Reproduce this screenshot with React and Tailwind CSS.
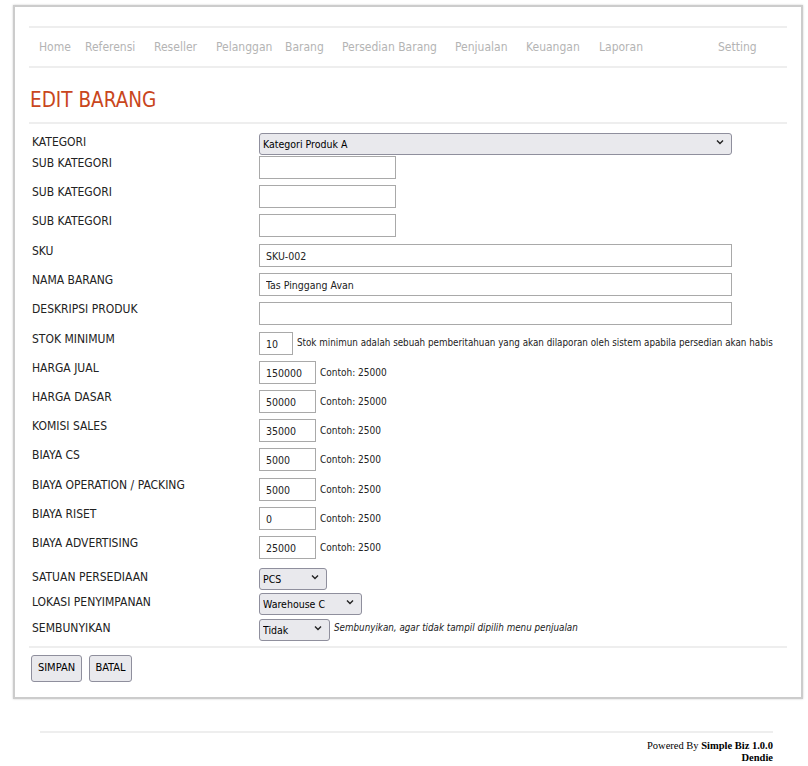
import React from 'react';

const NAV = [
  { label: 'Home', w: 'w-[46px]' },
  { label: 'Referensi', w: 'w-[69px]' },
  { label: 'Reseller', w: 'w-[62px]' },
  { label: 'Pelanggan', w: 'w-[69px]' },
  { label: 'Barang', w: 'w-[57px]' },
  { label: 'Persedian Barang', w: 'w-[113px]' },
  { label: 'Penjualan', w: 'w-[71px]' },
  { label: 'Keuangan', w: 'w-[73px]' },
  { label: 'Laporan', w: 'w-[119px]' },
  { label: 'Setting', w: 'w-auto' },
];

function Chevron() {
  return (
    <svg
      width="8"
      height="6"
      viewBox="0 0 8 6"
      className="pointer-events-none absolute right-[8px] top-1/2 -translate-y-1/2"
      aria-hidden
    >
      <path d="M1 1.5 L4 4.5 L7 1.5" fill="none" stroke="#222" strokeWidth="1.4" />
    </svg>
  );
}

function Select({ value, w }) {
  return (
    <div className={`relative h-[22px] ${w}`}>
      <select
        defaultValue={value}
        className="h-full w-full appearance-none rounded-[3px] border border-[#8f8f9d] bg-[#e9e9ed] pl-[3px] text-[10.5px] leading-none text-black outline-none"
      >
        <option>{value}</option>
      </select>
      <Chevron />
    </div>
  );
}

function Input({ value = '', w }) {
  return (
    <input
      type="text"
      defaultValue={value}
      className={`h-[23px] ${w} border border-[#a9a9a9] bg-white px-[6px] text-[10.5px] text-[#222] outline-none`}
    />
  );
}

function Hint({ children, italic, size = 'text-[10px]' }) {
  return (
    <span className={`ml-[4px] whitespace-nowrap ${size} text-[#222] ${italic ? 'italic' : ''}`}>{children}</span>
  );
}

function Row({ label, mt, pt, children }) {
  return (
    <div className={`flex items-start ${mt}`}>
      <div className={`w-[230px] shrink-0 pl-[3px] text-[12px] leading-[15px] text-[#222] ${pt}`}>{label}</div>
      <div className="flex items-center">{children}</div>
    </div>
  );
}

export default function App() {
  return (
    <div className="min-h-[766px] bg-white pt-[5px] text-[#222] [font-family:'DejaVu_Sans_Condensed','DejaVu_Sans',sans-serif]">
      <div className="ml-[13px] w-[790px] border-2 border-[#cccccc] bg-white px-[14px] pt-[19px] pb-[15px] shadow-[0_0_2px_rgba(0,0,0,0.2)]">
        <nav className="flex h-[42px] items-center border-y-2 border-[#eeeeee] pl-[10px] text-[12px] text-[#b4b4b4]">
          {NAV.map((n) => (
            <span key={n.label} className={`${n.w} shrink-0`}>{n.label}</span>
          ))}
        </nav>

        <h1 className="pt-[22px] pb-[12px] pl-[1px] text-[20.5px] leading-[20px] text-[#c9461c]">EDIT BARANG</h1>
        <div className="border-t-2 border-[#eeeeee]" />

        <form className="flex flex-col">
          <Row label="KATEGORI" mt="mt-[7px]" pt="pt-[4px]">
            <Select value="Kategori Produk A" w="w-[473px]" />
          </Row>
          <Row label="SUB KATEGORI" mt="mt-[3px]" pt="pt-0">
            <Input w="w-[137px]" />
          </Row>
          <Row label="SUB KATEGORI" mt="mt-[6px]" pt="pt-0">
            <Input w="w-[137px]" />
          </Row>
          <Row label="SUB KATEGORI" mt="mt-[6px]" pt="pt-0">
            <Input w="w-[137px]" />
          </Row>
          <Row label="SKU" mt="mt-[7px]" pt="pt-0">
            <Input value="SKU-002" w="w-[473px]" />
          </Row>
          <Row label="NAMA BARANG" mt="mt-[6px]" pt="pt-0">
            <Input value="Tas Pinggang Avan" w="w-[473px]" />
          </Row>
          <Row label="DESKRIPSI PRODUK" mt="mt-[6px]" pt="pt-0">
            <Input w="w-[473px]" />
          </Row>
          <Row label="STOK MINIMUM" mt="mt-[7px]" pt="pt-0">
            <Input value="10" w="w-[34px]" />
            <Hint size="text-[9.75px]">Stok minimun adalah sebuah pemberitahuan yang akan dilaporan oleh sistem apabila persedian akan habis</Hint>
          </Row>
          <Row label="HARGA JUAL" mt="mt-[6px]" pt="pt-0">
            <Input value="150000" w="w-[57px]" />
            <Hint>Contoh: 25000</Hint>
          </Row>
          <Row label="HARGA DASAR" mt="mt-[6px]" pt="pt-0">
            <Input value="50000" w="w-[57px]" />
            <Hint>Contoh: 25000</Hint>
          </Row>
          <Row label="KOMISI SALES" mt="mt-[6px]" pt="pt-0">
            <Input value="35000" w="w-[57px]" />
            <Hint>Contoh: 2500</Hint>
          </Row>
          <Row label="BIAYA CS" mt="mt-[6px]" pt="pt-0">
            <Input value="5000" w="w-[57px]" />
            <Hint>Contoh: 2500</Hint>
          </Row>
          <Row label="BIAYA OPERATION / PACKING" mt="mt-[7px]" pt="pt-0">
            <Input value="5000" w="w-[57px]" />
            <Hint>Contoh: 2500</Hint>
          </Row>
          <Row label="BIAYA RISET" mt="mt-[6px]" pt="pt-0">
            <Input value="0" w="w-[57px]" />
            <Hint>Contoh: 2500</Hint>
          </Row>
          <Row label="BIAYA ADVERTISING" mt="mt-[6px]" pt="pt-0">
            <Input value="25000" w="w-[57px]" />
            <Hint>Contoh: 2500</Hint>
          </Row>
          <Row label="SATUAN PERSEDIAAN" mt="mt-[7px]" pt="pt-[4px]">
            <Select value="PCS" w="w-[68px]" />
          </Row>
          <Row label="LOKASI PENYIMPANAN" mt="mt-[3px]" pt="pt-[4px]">
            <Select value="Warehouse C" w="w-[103px]" />
          </Row>
          <Row label="SEMBUNYIKAN" mt="mt-[4px]" pt="pt-[4px]">
            <Select value="Tidak" w="w-[71px]" />
            <Hint italic size="text-[9.75px]">Sembunyikan, agar tidak tampil dipilih menu penjualan</Hint>
          </Row>

          <div className="mt-[7px] border-t-2 border-[#eeeeee]" />

          <div className="mt-[7px] flex gap-[7px] pl-[2px]">
            <button type="button" className="h-[27px] w-[51px] rounded-[3px] border border-[#8f8f9d] bg-[#e9e9ed] text-[11px] text-black">
              SIMPAN
            </button>
            <button type="button" className="h-[27px] w-[43px] rounded-[3px] border border-[#8f8f9d] bg-[#e9e9ed] text-[11px] text-black">
              BATAL
            </button>
          </div>
        </form>
      </div>

      <footer className="mt-[32px] ml-[40px] w-[733px] border-t-2 border-[#eeeeee] pt-[7px] text-right text-[10.5px] leading-[12px] text-black [font-family:'Liberation_Serif',serif]">
        <div>
          Powered By <b>Simple Biz 1.0.0</b>
        </div>
        <div className="font-bold">Dendie</div>
      </footer>
    </div>
  );
}
